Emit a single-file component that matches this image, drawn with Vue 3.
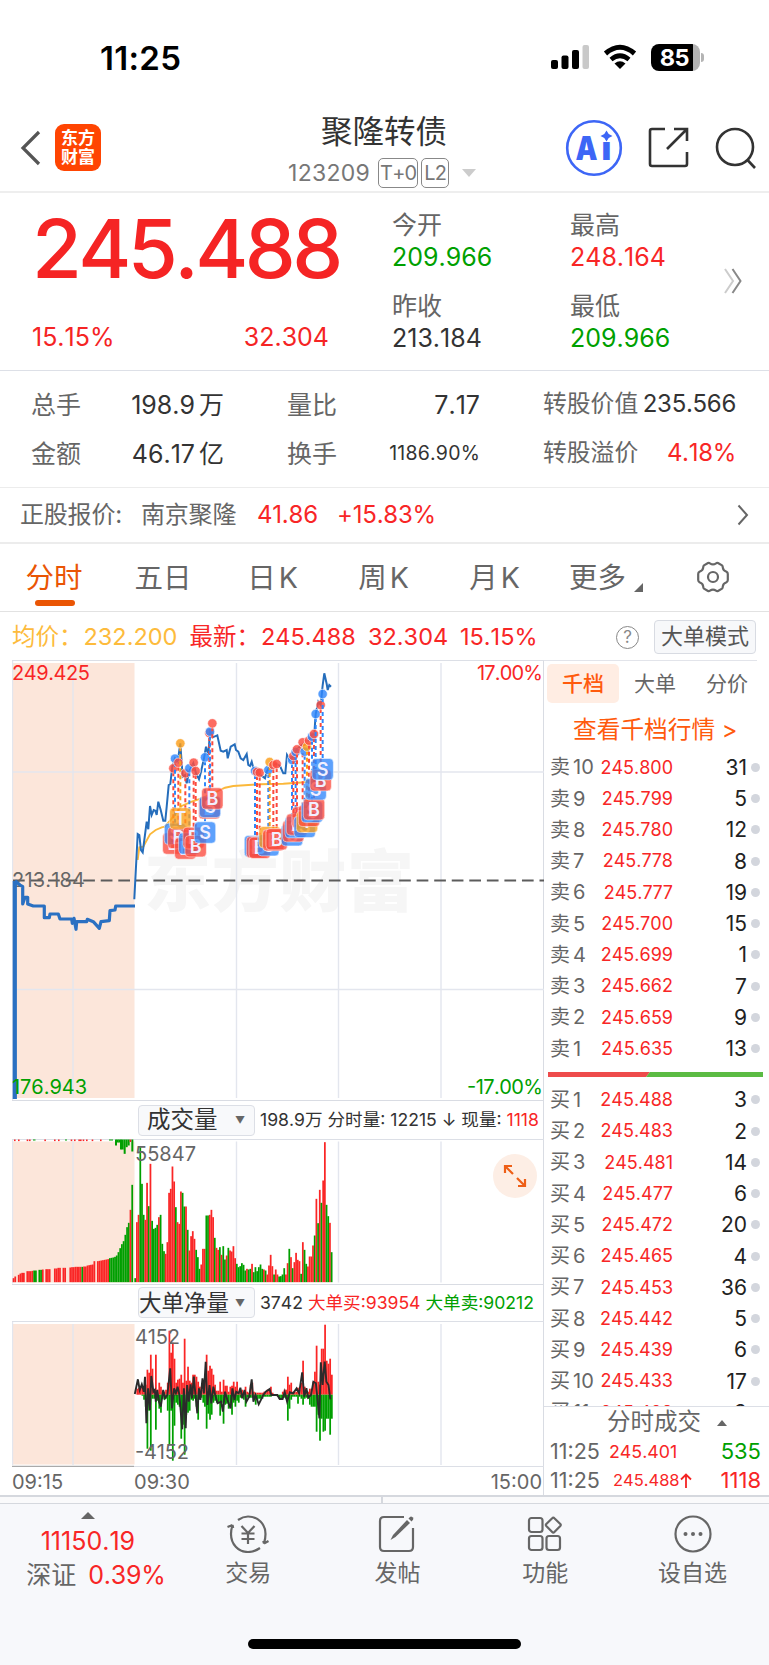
<template>
  <div class="page">
    <div class="status-bar">
      <span class="clock">11:25</span>
      <svg class="signal" width="40" height="26" viewBox="0 0 40 26">
        <rect x="1" y="16" width="7" height="9" rx="2" />
        <rect x="11.5" y="11.5" width="7" height="13.5" rx="2" />
        <rect x="22" y="6" width="7" height="19" rx="2" />
        <rect x="32.500" y="1" width="6.500" height="24" rx="2" fill="#c9c9c9" />
      </svg>
      <svg class="wifi" width="34" height="26" viewBox="0 0 34 26">
        <path d="M2.500 9.500Q17-3 31.500 9.500" fill="none" stroke="#000" stroke-width="5" />
        <path d="M8 15.500Q17 8 26 15.500" fill="none" stroke="#000" stroke-width="4.600" />
        <path d="M11.500 19.500Q17 15 22.500 19.500L17 25Z" />
      </svg>
      <div class="battery"><span>85</span></div>
      <i class="battery-nub"></i>
    </div>

    <header class="header">
      <svg class="back" width="22" height="36" viewBox="0 0 22 36">
        <path d="M19 2L3 18L19 34" fill="none" stroke="#555" stroke-width="3.200" />
      </svg>
      <div class="logo">东方<br />财富</div>
      <div class="title">
        <h1>聚隆转债</h1>
        <div class="code">
          <span>123209</span><em class="t0">T+0</em><em>L2</em>
          <svg width="14" height="8" viewBox="0 0 14 8"><path d="M0 0H14L7 8Z" fill="#ccc" /></svg>
        </div>
      </div>
      <svg class="ai" width="58" height="58" viewBox="0 0 58 58">
        <circle cx="29" cy="29" r="26.800" fill="none" stroke="#3d66f6" stroke-width="2.600" />
        <text x="10.500" y="40.500" class="ai-text" textLength="22" lengthAdjust="spacingAndGlyphs">A</text>
        <text x="36.500" y="40.500" class="ai-text">ı</text>
        <path d="M41.500 11.500L43.700 15L47.500 17L43.700 19L41.500 22.500L39.300 19L35.500 17L39.300 15Z" fill="#3d66f6" />
      </svg>
      <svg class="share" width="42" height="42" viewBox="0 0 42 42" fill="none" stroke="#333" stroke-width="2.600">
        <path d="M17 2H4Q2 2 2 4V37Q2 39 4 39H37Q39 39 39 37V25" />
        <path d="M26 2H39V14M38.500 2.500L19 22" />
      </svg>
      <svg class="search" width="44" height="44" viewBox="0 0 44 44" fill="none" stroke="#333" stroke-width="2.600">
        <circle cx="20" cy="20" r="18" />
        <path d="M32.500 33L40 41" />
      </svg>
    </header>

    <section class="quote">
      <div class="last">
        <strong>245.488</strong>
        <div class="change"><span>15.15%</span><span>32.304</span></div>
      </div>
      <div class="ohlc">
        <div v-for="o in ohlc" :key="o.label" class="ohlc-item">
          <label>{{ o.label }}</label>
          <b :class="o.tone">{{ o.value }}</b>
        </div>
      </div>
      <svg class="more" width="20" height="26" viewBox="0 0 20 26" fill="none" stroke-width="2">
        <path d="M2 1L10 13L2 25" stroke="#ccc" />
        <path d="M9.500 1L17.500 13L9.500 25" stroke="#888" />
      </svg>
    </section>

    <section class="stats">
      <div v-for="s in stats" :key="s.label" class="stat" :class="s.kind">
        <label>{{ s.label }}</label>
        <span :class="s.tone">{{ s.value }}<i v-if="s.unit">{{ s.unit }}</i></span>
      </div>
    </section>

    <section class="underlying">
      <span class="u-label">正股报价:</span>
      <span class="u-name">南京聚隆</span>
      <span class="red u-price">41.86</span>
      <span class="red">+15.83%</span>
      <svg width="12" height="22" viewBox="0 0 12 22"><path d="M1.500 1.500L10 11L1.500 20.500" fill="none" stroke="#666" stroke-width="2" /></svg>
    </section>

    <nav class="tabs">
      <span v-for="(t, i) in tabs" :key="t" :class="{ active: i === 0, spaced: t.endsWith('K') }">{{ t }}</span>
      <span class="tab-more">更多<svg width="9" height="9" viewBox="0 0 9 9"><path d="M9 0V9H0Z" fill="#666" /></svg></span>
      <svg class="gear" width="34" height="32" viewBox="0 0 34 32" fill="none" stroke="#666" stroke-width="2.200">
        <path d="M12 2Q13 1.500 14 2.300Q17 4.500 20 2.300Q21 1.500 22 2L26 4.400Q26.800 5 26.800 6.500Q27 9.500 30.500 10.800Q31.800 11.500 31.800 13V19Q31.800 20.500 30.500 21.200Q27 22.500 26.800 25.500Q26.800 27 26 27.600L22 30Q21 30.500 20 29.700Q17 27.500 14 29.700Q13 30.500 12 30L8 27.600Q7.200 27 7.200 25.500Q7 22.500 3.500 21.200Q2.200 20.500 2.200 19V13Q2.200 11.500 3.500 10.800Q7 9.500 7.200 6.500Q7.200 5 8 4.400Z" />
        <circle cx="17" cy="16" r="5" />
      </svg>
    </nav>

    <section class="summary">
      <span class="avg">均价：</span><span class="avg v1">232.200</span>
      <span class="red">最新：</span><span class="red v2">245.488</span>
      <span class="red v3">32.304</span><span class="red">15.15%</span>
      <span class="help">?</span>
      <span class="mode">大单模式</span>
    </section>

    <main class="board">
      <div class="charts">
        <svg class="chart main-chart" width="532" height="440" viewBox="12 660 532 440">
          <rect x="12" y="663" width="122.500" height="435" fill="#fce6da" />
          <text x="144" y="906" class="watermark" textLength="270">东方财富</text>
          <path class="grid" d="M73 663V1098M236.500 663V1098M338.500 663V1098M441 663V1098M12 772H544M12 989.500H544M12.500 660V1100" />
          <path class="axis" d="M12 660.500H544" />
          <path d="M13 880.500H544" stroke="#5c5c5c" stroke-width="1.900" stroke-dasharray="11.7 5.850" />
          <text x="12" y="680" class="lab up" textLength="78">249.425</text>
          <text x="543" y="680" class="lab up end" textLength="66">17.00%</text>
          <text x="12" y="887" class="lab" textLength="73">213.184</text>
          <path d="M14.800 881V1099" stroke="#2a70c2" stroke-width="4.200" />
          <text x="12" y="1093.500" class="lab down" textLength="75">176.943</text>
          <text x="543" y="1093.500" class="lab down end" textLength="76">-17.00%</text>
          <polyline :points="auctionLine" fill="none" stroke="#2a70c2" stroke-width="3.200" stroke-linejoin="round" />
          <polyline :points="avgLine" fill="none" stroke="#fbb83a" stroke-width="1.900" />
          <polyline :points="priceLine" fill="none" stroke="#256dbb" stroke-width="2" />
          <g v-for="(m, i) in markers" :key="'s' + i" :stroke="m.color" :fill="m.color">
            <path :d="`M${m.x} ${m.y + 4}V${m.y + 65}`" stroke-width="2" stroke-dasharray="4 3" />
            <circle :cx="m.x" :cy="m.y" r="4.700" stroke="#fff" stroke-width=".6" fill-opacity=".82" />
          </g>
          <g v-for="(m, i) in markers" :key="'b' + i">
            <rect :x="m.x - 10.700" :y="m.y + 64.500" width="21.400" height="21.400" rx="4" :fill="m.color" fill-opacity=".78" stroke="#fff" stroke-opacity=".5" stroke-width="1" />
            <text :x="m.x" :y="m.y + 81.800" class="mark">{{ m.type }}</text>
          </g>
        </svg>

        <div class="sub-head">
          <span class="picker">成交量<i>▼</i></span>
          <span>198.9万 分时量: 12215 ↓ 现量: <b class="red">1118</b></span>
        </div>
        <div class="sub-body">
          <svg class="chart" width="532" height="145" viewBox="12 1138.500 532 145">
            <rect x="12" y="1141" width="122.500" height="141" fill="#fce6da" />
            <path class="grid" d="M12.500 1139V1283M73 1141V1282M236.500 1141V1282M338.500 1141V1282M441 1141V1282" />
            <path class="axis" d="M12 1139H544" />
            <rect v-for="(b, i) in volumeBars" :key="i" :x="b.x" :y="b.y" :width="b.w" :height="b.h" :fill="b.color" />
            <text x="135" y="1160" class="lab" textLength="61">55847</text>
          </svg>
          <div class="expand">
            <svg width="24" height="24" viewBox="0 0 24 24" fill="none" stroke="#ee5f17" stroke-width="2.200">
              <path d="M2 9V2H9M2 2L10 10M15 22H22V15M22 22L14 14" />
            </svg>
          </div>
        </div>

        <div class="sub-head second">
          <span class="picker tight">大单净量<i>▼</i></span>
          <span>3742 <b class="red">大单买:93954</b> <b class="green">大单卖:90212</b></span>
        </div>
        <svg class="chart" width="532" height="146" viewBox="12 1321 532 146">
          <rect x="12" y="1324" width="122.500" height="140.500" fill="#fce6da" />
          <path class="grid" d="M12.500 1321V1465M73 1324V1465M236.500 1324V1465M338.500 1324V1465M441 1324V1465" />
          <path class="axis" d="M12 1321.500H544M134 1466.500H544" />
          <path d="M12 1466.500H134" stroke="#aaa" stroke-width="1.500" />
          <rect v-for="(b, i) in flowBars" :key="i" :x="b.x" :y="b.y" width="1.750" :height="b.h" :fill="b.color" />
          <polyline :points="netLine" fill="none" stroke="#2b2b2b" stroke-width="1.900" />
          <text x="135" y="1343.500" class="lab" textLength="45">4152</text>
          <text x="135" y="1458.500" class="lab" textLength="54">-4152</text>
        </svg>
        <div class="times"><span>09:15</span><span>09:30</span><span>15:00</span></div>
      </div>

      <aside class="depth">
        <div class="depth-tabs"><span class="on">千档</span><span>大单</span><span>分价</span></div>
        <div class="depth-link">查看千档行情 &gt;</div>
        <div class="book">
          <div v-for="(r, i) in asks" :key="'a' + i" class="level">
            <label>卖<i>{{ 10 - i }}</i></label><span class="red">{{ r[0] }}</span><b>{{ r[1] }}</b><u></u>
          </div>
          <svg class="ratio" width="215" height="5" viewBox="0 0 215 5">
            <path d="M0 0H102L98 5H0Z" fill="#ee4b4b" />
            <path d="M102 0H215V5H98Z" fill="#5bbb43" />
          </svg>
          <div v-for="(r, i) in bids" :key="'b' + i" class="level">
            <label>买<i>{{ i + 1 }}</i></label><span class="red">{{ r[0] }}</span><b>{{ r[1] }}</b><u></u>
          </div>
        </div>
        <div class="ticks">
          <div class="ticks-title">分时成交<svg width="10" height="6" viewBox="0 0 10 6"><path d="M0 6H10L5 0Z" fill="#666" /></svg></div>
          <div class="tick"><label>11:25</label><span class="red">245.401</span><b class="green">535</b></div>
          <div class="tick"><label>11:25</label><span class="red arrow">245.488<svg width="12" height="15" viewBox="0 0 12 15"><path d="M6 15V1.500M1 6.500L6 1.500L11 6.500" fill="none" stroke="#f42424" stroke-width="1.800" /></svg></span><b class="red">1118</b></div>
        </div>
      </aside>
    </main>

    <div class="splitter"><i></i></div>

    <footer class="footer">
      <div class="index">
        <svg width="14" height="7" viewBox="0 0 14 7"><path d="M0 7H14L7 0Z" fill="#666" /></svg>
        <span class="red idx-value">11150.19</span>
        <span class="idx-row">深证<b class="red">0.39%</b></span>
      </div>
      <div class="action a1">
        <svg width="44" height="38" viewBox="0 0 44 38" class="ico">
          <path d="M12 5Q17 1.500 22 1.500C32 1.500 39.500 9 39.500 19Q39.500 23.500 38 28.500M38 28.500L37.200 26M38 28.500L42.500 26" />
          <path d="M34 33Q28 37 22 37C12 37 5 29 5 19Q5 15 6.500 10M6.500 10L1.500 12M6.500 10L7.200 13" />
          <path d="M15.500 11L22 18L28.500 11M22 18V29M15.500 18.500H28.500M15.500 24H28.500" />
        </svg>
        <span>交易</span>
      </div>
      <div class="action a2">
        <svg width="38" height="38" viewBox="0 0 38 38" class="ico">
          <path d="M26 2H6Q2 2 2 6V32Q2 36 6 36H31Q35 36 35 32V13" />
          <path d="M12.500 25L15 20L29 5L32 8L17.500 22Z" fill="#666" stroke="none" />
          <path d="M30.500 3.500L32 2Q33 1 34.500 2.200Q36 3.500 35 4.800L33.500 6.500Z" fill="#666" stroke="none" />
        </svg>
        <span>发帖</span>
      </div>
      <div class="action a3">
        <svg width="36" height="38" viewBox="0 0 36 38" class="ico">
          <rect x="2" y="3" width="13.500" height="14" rx="2.500" />
          <rect x="2" y="21" width="13.500" height="14" rx="2.500" />
          <rect x="19.500" y="21" width="13.500" height="14" rx="2.500" />
          <path d="M25.200 3.200Q26.300 2 27.400 3.200L33.300 9Q34.200 10 33.300 11L27.400 17Q26.300 18.200 25.200 17L19.300 11Q18.400 10 19.300 9Z" />
        </svg>
        <span>功能</span>
      </div>
      <div class="action a4">
        <svg width="40" height="38" viewBox="0 0 40 38" class="ico">
          <circle cx="20" cy="19" r="17.500" />
          <g fill="#666" stroke="none"><circle cx="12.500" cy="19" r="2" /><circle cx="20" cy="19" r="2" /><circle cx="27.500" cy="19" r="2" /></g>
        </svg>
        <span>设自选</span>
      </div>
    </footer>
    <div class="home"><i></i></div>
  </div>
</template>

<script setup>
const RED = '#fa2626'
const GREEN = '#009f00'

const ohlc = [
  { label: '今开', value: '209.966', tone: 'green' },
  { label: '最高', value: '248.164', tone: 'red' },
  { label: '昨收', value: '213.184', tone: '' },
  { label: '最低', value: '209.966', tone: 'green' },
]

const stats = [
  { label: '总手', value: '198.9', unit: '万' },
  { label: '量比', value: '7.17', kind: 'mid' },
  { label: '转股价值', value: '235.566', kind: 'wide' },
  { label: '金额', value: '46.17', unit: '亿' },
  { label: '换手', value: '1186.90%', kind: 'mid', tone: 'small' },
  { label: '转股溢价', value: '4.18%', kind: 'wide', tone: 'red' },
]

const tabs = ['分时', '五日', '日K', '周K', '月K']

const asks = [
  ['245.800', 31], ['245.799', 5], ['245.780', 12], ['245.778', 8], ['245.777', 19],
  ['245.700', 15], ['245.699', 1], ['245.662', 7], ['245.659', 9], ['245.635', 13],
]
const bids = [
  ['245.488', 3], ['245.483', 2], ['245.481', 14], ['245.477', 6], ['245.472', 20], ['245.465', 4],
  ['245.453', 36], ['245.442', 5], ['245.439', 6], ['245.433', 17], ['245.429', 9],
]

// series are stored on a fine grid, scaled down to chart units here
const scale = (pts, ox, oy, sx = 3) => pts.map(([x, y]) => `${(ox + x / sx).toFixed(1)},${(oy + y / 3).toFixed(1)}`).join(' ')

const auctionLine = scale([
  [45, 62], [60, 75], [68, 80], [68, 132], [75, 112], [83, 112], [83, 132], [100, 138], [133, 138], [133, 173],
  [148, 173], [150, 162], [175, 162], [180, 177], [215, 177], [217, 190], [222, 175], [228, 208], [230, 185],
  [260, 185], [262, 178], [280, 185], [298, 205], [303, 185], [328, 182], [330, 152], [345, 150], [347, 138], [405, 138],
], 0, 860)

const priceLine = scale([
  [403, 748], [413, 552], [418, 555], [423, 600], [428, 607], [440, 515], [445, 538], [450, 468], [455, 495],
  [461, 480], [466, 482], [470, 495], [475, 455], [482, 480], [490, 512], [496, 512], [500, 470], [506, 405],
  [511, 402], [517, 350], [525, 325], [533, 335], [541, 280], [548, 380], [555, 375], [560, 400], [566, 370],
  [572, 355], [580, 340], [588, 370], [597, 388], [603, 365], [612, 325], [618, 290], [625, 315], [630, 245],
  [638, 262], [652, 256], [662, 302], [670, 305], [680, 300], [683, 325], [692, 290], [704, 283], [708, 300],
  [715, 305], [722, 325], [730, 330], [740, 312], [745, 345], [750, 348], [755, 335], [762, 362], [775, 370],
  [795, 385], [800, 365], [812, 345], [830, 342], [840, 348], [850, 370], [856, 370], [861, 315], [870, 330],
  [880, 320], [890, 298], [905, 285], [915, 280], [925, 272], [935, 255], [943, 252], [947, 192], [955, 155],
  [962, 165], [968, 105], [973, 70], [980, 102], [983, 120], [988, 105], [993, 110],
], 0, 650)

const avgLine = scale([
  [413, 630], [418, 592], [430, 590], [450, 553], [467, 540], [485, 532], [495, 530], [520, 500], [545, 468],
  [575, 455], [605, 445], [650, 425], [675, 413], [700, 408], [780, 403], [850, 401], [925, 396], [980, 388],
], 0, 650)

// trade signals: buy, sell, intraday T
const tones = { B: '#fb4a3e', S: '#2f86fb', T: '#fb9d18' }
const markers = [
  ['B', 130, 325], ['S', 135, 296], ['B', 145, 308], ['T', 151, 250], ['B', 166, 340], ['S', 178, 325],
  ['B', 191, 308], ['B', 197, 333], ['S', 225, 292], ['B', 238, 219], ['S', 240, 215], ['B', 247, 190],
  ['S', 375, 333], ['B', 381, 336], ['B', 389, 338], ['S', 415, 330], ['T', 419, 306], ['B', 430, 315],
  ['B', 440, 312], ['S', 486, 300], ['B', 490, 288], ['S', 497, 276], ['B', 501, 268], ['B', 518, 247],
  ['S', 524, 275], ['T', 531, 260], ['B', 537, 242], ['S', 546, 230], ['B', 552, 222], ['S', 557, 162],
  ['B', 572, 135], ['S', 578, 102],
].map(([type, x, y]) => ({ type, x: 130 + x / 3, y: 660 + y / 3, color: tones[type] }))

// volume per minute, first character is the colour of the bar
const minutes = `g548 r380 r358 g155 g265 g358 r373 r262 g332 r205 g376 g400 g397 g388 r365 g358 g445 g467 r475 r440
  r292 r280 r213 r258 g335 r380 r385 r288 g292 g333 r333 g403 r465 r422 r407 r430 g463 g485 g520 r507
  r460 r460 g360 g360 r358 r343 r365 g427 r457 r463 g455 r478 g452 g492 r480 g457 r465 r468 r452 r488
  g505 g515 g512 g503 g508 g525 r520 g522 g520 r505 g530 g515 g527 g515 g507 g520 r522 g525 r537 r510
  r478 r512 g537 r522 r537 g543 g542 g537 g518 r537 r503 g460 r485 g518 r500 r472 r493 r497 g535 r440
  g463 g505 r513 r483 r483 r450 g420 r310 g383 r283 g322 r255 r140 g328 g362 r382 g470`.split(/\s+/)
const auction = `r548 r543 g560 r538 r534 r532 r532 g560 r527 r527 r527 r526 g525 g525 g560 g523 g523 r522 g560 r521 r521
  r521 g560 g560 r519 r519 r517 r517 g560 r517 r517 g560 g560 r516 r515 r515 r514 r514 r514 r514 g514 r513 r513 r510
  r509 r508 r507 r497 g560 r497 r496 r495 r494 r493 r492 r491 g488 g487 g486 g484 g480 g470 g458 g446 g437 g418 g395
  g382 r343 g268`.split(/\s+/)
const hanging = [[345, 150], [350, 141], [355, 141], [360, 162], [365, 162], [371, 175], [377, 155], [383, 150], [394, 168]]
const flecks = [42, 54, 80, 87, 133, 162, 174, 212, 222, 235, 240, 248, 258, 275, 300]

const bar = (code, x) => ({
  x: x / 3,
  y: 1095 + code.slice(1) / 3,
  w: 1.75,
  h: (560 - code.slice(1)) / 3,
  color: code[0] === 'r' ? RED : GREEN,
})
const volumeBars = [
  ...auction.map((c, i) => bar(c, 38 + i * 5.16)),
  ...minutes.map((c, i) => bar(c, 403 + i * 5.08)),
  ...hanging.map(([x, y]) => ({ x: x / 3, y: 1139, w: 2, h: (y - 132) / 3, color: GREEN })),
  ...flecks.map((x) => ({ x: x / 3, y: 1139, w: 1.6, h: 1.6, color: RED })),
  { x: 129.600, y: 1139, w: 1.600, h: 2.500, color: RED },
  { x: 33, y: 1139, w: 2.500, h: 1, color: GREEN },
  { x: 65, y: 1139, w: 2, h: 1, color: GREEN },
  { x: 109, y: 1139, w: 4, h: 1, color: GREEN },
]

const inflow = [
  0, 6, 7, 8, 8, 8, 10, 25, 22, 40, 26, 3, 40, 5, 12, 8, 3, 3, 5, 12, 64, 42, 52, 36, 12, 15, 16, 20, 12, 56,
  14, 28, 14, 12, 20, 20, 18, 13, 8, 5, 5, 14, 40, 24, 29, 26, 20, 10, 4, 4, 13, 3, 15, 9, 9, 3, 8, 9, 13, 8,
  13, 3, 3, 5, 3, 8, 3, 2, 10, 12, 3, 2, 2, 2, 2, 2, 3, 3, 5, 4, 8, 2, 0, 0, 0, 0, 0, 3, 5, 5,
  18, 10, 12, 3, 3, 3, 7, 5, 12, 34, 8, 3, 3, 6, 6, 13, 23, 49, 13, 10, 46, 46, 70, 34, 31, 36, 20,
]
const outflow = [
  0, 0, 0, 0, 1, 5, 12, 54, 16, 56, 4, 4, 35, 6, 14, 18, 4, 5, 4, 16, 50, 16, 66, 31, 8, 10, 12, 44, 30, 60,
  20, 18, 16, 5, 6, 4, 12, 25, 3, 3, 8, 12, 34, 19, 25, 20, 8, 6, 8, 8, 21, 8, 29, 10, 9, 14, 9, 20, 8, 12,
  6, 8, 3, 3, 5, 12, 3, 3, 3, 3, 3, 10, 5, 4, 4, 4, 2, 2, 2, 2, 2, 0, 0, 0, 2, 4, 4, 3, 3, 4,
  26, 14, 5, 2, 2, 2, 9, 2, 4, 10, 4, 3, 4, 10, 12, 12, 12, 37, 20, 46, 24, 37, 36, 24, 24, 40, 24,
]
const flowBars = [
  ...inflow.map((h, i) => ({ x: 134.700 + i * 1.692, y: 1394.700 - h, h, color: RED })),
  ...outflow.map((h, i) => ({ x: 134.700 + i * 1.692, y: 1394.700, h, color: GREEN })),
]

const netLine = scale([
  [384, 327], [393, 283], [398, 315], [404, 298], [410, 320], [413, 275], [417, 415], [422, 310], [427, 375],
  [431, 273], [437, 320], [441, 315], [444, 350], [448, 315], [453, 350], [458, 365], [465, 315], [470, 340],
  [477, 330], [485, 250], [490, 370], [496, 310], [501, 325], [506, 305], [511, 330], [519, 433], [524, 310],
  [529, 430], [533, 300], [538, 350], [543, 298], [547, 340], [552, 275], [557, 330], [562, 385], [567, 310],
  [571, 345], [577, 280], [581, 325], [586, 230], [591, 360], [597, 300], [602, 355], [608, 305], [613, 330],
  [620, 355], [630, 350], [635, 380], [641, 320], [648, 345], [657, 370], [662, 310], [668, 345], [673, 320],
  [680, 325], [685, 308], [690, 340], [697, 315], [702, 350], [710, 335], [717, 283], [722, 350], [728, 330],
  [737, 358], [750, 330], [757, 320], [768, 312], [773, 330], [790, 330], [797, 342], [805, 342], [811, 320],
  [818, 350], [826, 322], [835, 325], [845, 310], [852, 325], [861, 262], [867, 335], [873, 310], [878, 338],
  [886, 330], [893, 290], [900, 295], [910, 400], [914, 232], [919, 300], [925, 230], [930, 290], [936, 300],
  [941, 343],
], 0, 1285, 2.849)
</script>

<style>
body {
  margin: 0;
  background: #fff;
}
</style>

<style scoped>
.page {
  width: 769px;
  height: 1665px;
  overflow: hidden;
  display: flex;
  flex-direction: column;
  background: #fff;
  color: #333;
  font-family: Inter, "Noto Sans CJK SC", sans-serif;
  font-size: 25px;
  font-kerning: none;
  line-height: 1.2;
}

.page > * {
  flex-shrink: 0;
  box-sizing: border-box;
}

i, em {
  font-style: normal;
}

b {
  font-weight: 400;
}

svg {
  flex-shrink: 0;
  display: block;
}

.red {
  color: #f82626;
}

.green {
  color: #00a000;
}

.status-bar {
  height: 114px;
  padding: 0 65px 0 100px;
  display: flex;
  align-items: center;
}

.clock {
  flex: 1;
  margin-top: 3px;
  color: #000;
  font-size: 33px;
  font-weight: 600;
  letter-spacing: 0.3px;
}

.signal {
  margin-right: 13px;
}

.wifi {
  margin-right: 14px;
}

.battery {
  width: 49px;
  height: 27px;
  border-radius: 8px;
  background: linear-gradient(90deg, #000 42px, #b4b4b4 42px);
  color: #fff;
  font-size: 23.500px;
  font-weight: 700;
  line-height: 27px;
  text-align: center;
  letter-spacing: -0.5px;
}

.battery span {
  margin-right: 2px;
}

.battery-nub {
  width: 3px;
  height: 9px;
  margin-left: 1px;
  border-radius: 0 4px 4px 0;
  background: #b4b4b4;
}

.header {
  height: 79px;
  border-bottom: 2px solid #eee;
  display: flex;
  align-items: flex-start;
}

.back {
  margin: 16px 0 0 20px;
}

.logo {
  width: 46px;
  height: 47px;
  margin: 10px 0 0 13px;
  padding-top: 5px;
  box-sizing: border-box;
  border-radius: 9px;
  background: #ff4502;
  color: #fff;
  font-size: 17px;
  font-weight: 700;
  line-height: 19px;
  text-align: center;
}

.title {
  width: 465px;
  box-sizing: border-box;
  padding-left: 187px;
}

h1 {
  margin: 0;
  padding: 1px 0 0 33px;
  font-size: 31.500px;
  font-weight: 400;
  line-height: 34px;
}

.code {
  display: flex;
  align-items: center;
  margin-top: 9px;
  color: #777;
  font-size: 23px;
  line-height: 30px;
  letter-spacing: 0.3px;
}

.code em {
  box-sizing: border-box;
  width: 28px;
  height: 30px;
  margin-left: 3px;
  border: 1.500px solid #888;
  border-radius: 5px;
  font-size: 20px;
  line-height: 28px;
  text-align: center;
  letter-spacing: -0.8px;
}

.code .t0 {
  width: 40px;
  margin-left: 8px;
}

.code svg {
  margin-left: 13px;
}

.ai {
  margin: 5px 0 0 -1px;
}

.ai-text {
  fill: #3d66f6;
  font: 900 33px "Inter", sans-serif;
}

.share {
  margin: 13px 0 0 25px;
}

.search {
  margin: 13px 0 0 25px;
}

.quote {
  height: 178px;
  border-bottom: 1.500px solid #dde0e7;
  display: flex;
}

.last {
  width: 392px;
  box-sizing: border-box;
  padding: 10px 63px 0 32px;
  color: #f52424;
}

.last strong {
  display: block;
  height: 91px;
  font-size: 81px;
  font-weight: 500;
  line-height: 92px;
  letter-spacing: -3.600px;
}

.change {
  display: flex;
  justify-content: space-between;
  margin-top: 26px;
  line-height: 34px;
}

.ohlc {
  width: 331px;
  display: grid;
  grid-template-columns: 178px 1fr;
  grid-template-rows: 81px 81px;
  padding-top: 17px;
}

.ohlc-item {
  display: flex;
  flex-direction: column;
  line-height: 31px;
}

.ohlc-item b {
  margin-top: 1px;
}

label {
  color: #666;
}

.more {
  margin-top: 75px;
}

.stats {
  height: 117px;
  padding: 9px 32px 0 31px;
  border-bottom: 1.500px solid #ececec;
  display: grid;
  grid-template-columns: 193px 193px 193px;
  column-gap: 63px;
  grid-template-rows: 49px 49px;
}

.stat {
  display: flex;
  justify-content: space-between;
  align-items: center;
}

.stat i {
  margin-left: 4px;
}

.stat.wide label {
  font-size: 23.800px;
}

.stat.wide span {
  font-size: 24px;
  letter-spacing: -0.3px;
}

.stat .small {
  font-size: 19.500px;
  letter-spacing: 0.2px;
}

.underlying {
  height: 56px;
  padding: 0 20px 0 20px;
  border-bottom: 2px solid #ececec;
  display: flex;
  align-items: center;
  color: #666;
  font-size: 24px;
  letter-spacing: -0.2px;
}

.u-label {
  width: 121px;
}

.u-name {
  width: 116px;
}

.u-price {
  width: 80px;
}

.underlying svg {
  margin-left: auto;
}

.tabs {
  height: 68px;
  border-bottom: 1.500px solid #e2e2e2;
  display: flex;
  align-items: center;
  color: #666;
  font-size: 28.500px;
  white-space: nowrap;
}

.tabs span {
  height: 64px;
  line-height: 64px;
  width: 108px;
  margin-left: 3px;
  display: flex;
  justify-content: center;
}

.tabs .spaced {
  letter-spacing: 3px;
}

.tabs .active {
  position: relative;
  width: 56px;
  margin-left: 26px;
  margin-right: 24px;
  color: #ea5504;
}

.tabs .active::after {
  content: "";
  position: absolute;
  left: 9px;
  bottom: 4px;
  width: 40px;
  height: 6px;
  border-radius: 3px;
  background: #ea5504;
}

.tabs .tab-more {
  width: 78px;
  margin-left: 19px;
  align-items: flex-end;
  justify-content: flex-start;
}

.tab-more svg {
  margin: 0 0 18px 8px;
}

.gear {
  margin-left: 49px;
  margin-bottom: 2px;
}

.summary {
  height: 48px;
  padding: 2px 13px 0 12px;
  display: flex;
  align-items: center;
  font-size: 23.500px;
}

.avg {
  color: #fdbb3c;
}

.v1 {
  width: 107px;
  padding-left: 1px;
  box-sizing: border-box;
}

.v2 {
  width: 107px;
  padding-left: 1px;
}

.v3 {
  width: 92px;
}

.help {
  width: 21px;
  height: 21px;
  margin-left: auto;
  border: 1.500px solid #888;
  border-radius: 50%;
  color: #888;
  font-size: 17px;
  line-height: 21px;
  text-align: center;
}

.mode {
  width: 100px;
  height: 32px;
  margin-left: 15px;
  border: 1.500px solid #d8dbe2;
  border-radius: 4px;
  background: #f7f8fa;
  color: #555;
  font-size: 22px;
  line-height: 31px;
  text-align: center;
}

.board {
  height: 835px;
  display: flex;
}

.charts {
  width: 544px;
  box-sizing: border-box;
  padding-left: 12px;
  border-right: 1px solid #d9dce3;
  font-size: 20px;
}

.chart {
  overflow: hidden;
}

.grid {
  fill: none;
  stroke: #e3e6ee;
  stroke-width: 1.400;
}

.axis {
  fill: none;
  stroke: #dcdfe6;
  stroke-width: 1.200;
}

.lab {
  fill: #666;
  font-size: 20px;
}

.lab.up {
  fill: #f82626;
}

.lab.down {
  fill: #00a000;
}

.lab.end {
  text-anchor: end;
}

.watermark {
  fill: #f6f6f6;
  font-size: 67px;
  font-weight: 900;
}

.mark {
  fill: #f1efff;
  font-size: 18px;
  font-weight: 600;
  text-anchor: middle;
}

.sub-head {
  height: 39px;
  box-sizing: border-box;
  border-top: 1.500px solid #d9dce3;
  padding-left: 126px;
  display: flex;
  align-items: center;
  gap: 5px;
  font-size: 17.600px;
  white-space: nowrap;
}

.sub-head.second {
  height: 37px;
  padding-bottom: 1px;
}

.picker {
  flex-shrink: 0;
  box-sizing: border-box;
  width: 117px;
  height: 31px;
  padding: 0 9px 0 8px;
  border: 1.500px solid #dcdfe6;
  border-radius: 4px;
  background: #f8f9fb;
  display: flex;
  align-items: center;
  justify-content: space-between;
  font-size: 23.500px;
}

.picker.tight {
  padding: 0 9px 0 0;
  font-size: 22.500px;
}

.picker i {
  color: #666;
  font-size: 10px;
}

.sub-body {
  position: relative;
  height: 145px;
}

.expand {
  position: absolute;
  left: 481px;
  top: 15px;
  width: 44px;
  height: 44px;
  border-radius: 50%;
  background: #fdeee5;
  display: flex;
  align-items: center;
  justify-content: center;
}

.times {
  height: 29px;
  padding: 0 1px 0 0;
  display: flex;
  align-items: center;
  color: #666;
}

.times span:nth-child(2) {
  margin-left: 71px;
  flex: 1;
}

.depth {
  flex: 1;
  min-width: 0;
  display: flex;
  flex-direction: column;
}

.depth-tabs {
  height: 43px;
  margin-right: 12px;
  padding-left: 3px;
  border-top: 1px solid #e2e4ea;
  box-sizing: border-box;
  display: flex;
  align-items: flex-end;
  color: #666;
  font-size: 21px;
}

.depth-tabs span {
  flex-shrink: 0;
  width: 72px;
  height: 39px;
  line-height: 39px;
  text-align: center;
}

.depth-tabs .on {
  border-radius: 5px;
  background: #ffede3;
  color: #ff5a0c;
  font-weight: 500;
}

.depth-link {
  height: 49px;
  padding-left: 29px;
  color: #ff5a0c;
  font-size: 23.700px;
  line-height: 54px;
  white-space: nowrap;
}

.book {
  height: 657px;
  overflow: hidden;
}

.level {
  height: 31.250px;
  padding-left: 6px;
  display: flex;
  align-items: center;
  font-size: 20px;
}

.level label {
  width: 47px;
  white-space: nowrap;
}

.level label i {
  margin-left: 3px;
}

.level span {
  width: 76px;
  font-size: 18px;
  text-align: right;
}

.level b {
  flex: 1;
  font-size: 21px;
  text-align: right;
  color: #222;
}

.level u {
  width: 9px;
  height: 9px;
  margin: 0 9px 0 4px;
  border-radius: 50%;
  background: #d3d6dd;
}

.ratio {
  margin: 8px 0 7px 4px;
}

.ticks {
  flex: 1;
  border-top: 1.500px solid #dcdfe6;
  color: #666;
}

.ticks-title {
  height: 30px;
  padding: 1px 0 0 21px;
  box-sizing: border-box;
  display: flex;
  align-items: center;
  justify-content: center;
  gap: 16px;
  font-size: 23.500px;
}

.tick {
  height: 29px;
  padding: 0 8px 0 6px;
  display: flex;
  align-items: center;
  font-size: 21.500px;
}

.tick label {
  width: 59px;
}

.tick span {
  flex: 1;
  font-size: 17.800px;
}

.tick .arrow {
  padding-left: 4px;
  display: flex;
  align-items: center;
  font-size: 16.500px;
}

.tick b {
  font-size: 22px;
}

.splitter {
  height: 9px;
  border-top: 2px solid #d5d8de;
  border-bottom: 1.500px solid #d5d8de;
  background: #fafafb;
  display: flex;
}

.splitter i {
  width: 2px;
  margin-left: 381px;
  background: #d5d8de;
}

.footer {
  height: 135px;
  padding-top: 8px;
  background: #f7f8fb;
  display: flex;
  color: #666;
}

.index {
  width: 176px;
  display: flex;
  flex-direction: column;
  align-items: center;
}

.idx-value {
  margin-top: 5px;
  line-height: 34px;
}

.idx-row {
  line-height: 34px;
  padding-left: 16px;
}

.idx-row b {
  margin-left: 12px;
  letter-spacing: -0.2px;
}

.action {
  display: flex;
  flex-direction: column;
  align-items: center;
  font-size: 23px;
  line-height: 30px;
  width: 148px;
  padding-top: 3px;
}

.a1 {
  width: 145px;
}

.a2 {
  width: 154px;
}

.a3 {
  width: 142px;
}

.a4 {
  width: 153px;
}

.action span {
  margin-top: 5px;
}

.ico {
  fill: none;
  stroke: #666;
  stroke-width: 2.200;
}

.home {
  height: 26px;
  background: #f7f8fb;
  display: flex;
  justify-content: center;
}

.home i {
  width: 273px;
  height: 10px;
  border-radius: 5px;
  background: #000;
}
</style>
